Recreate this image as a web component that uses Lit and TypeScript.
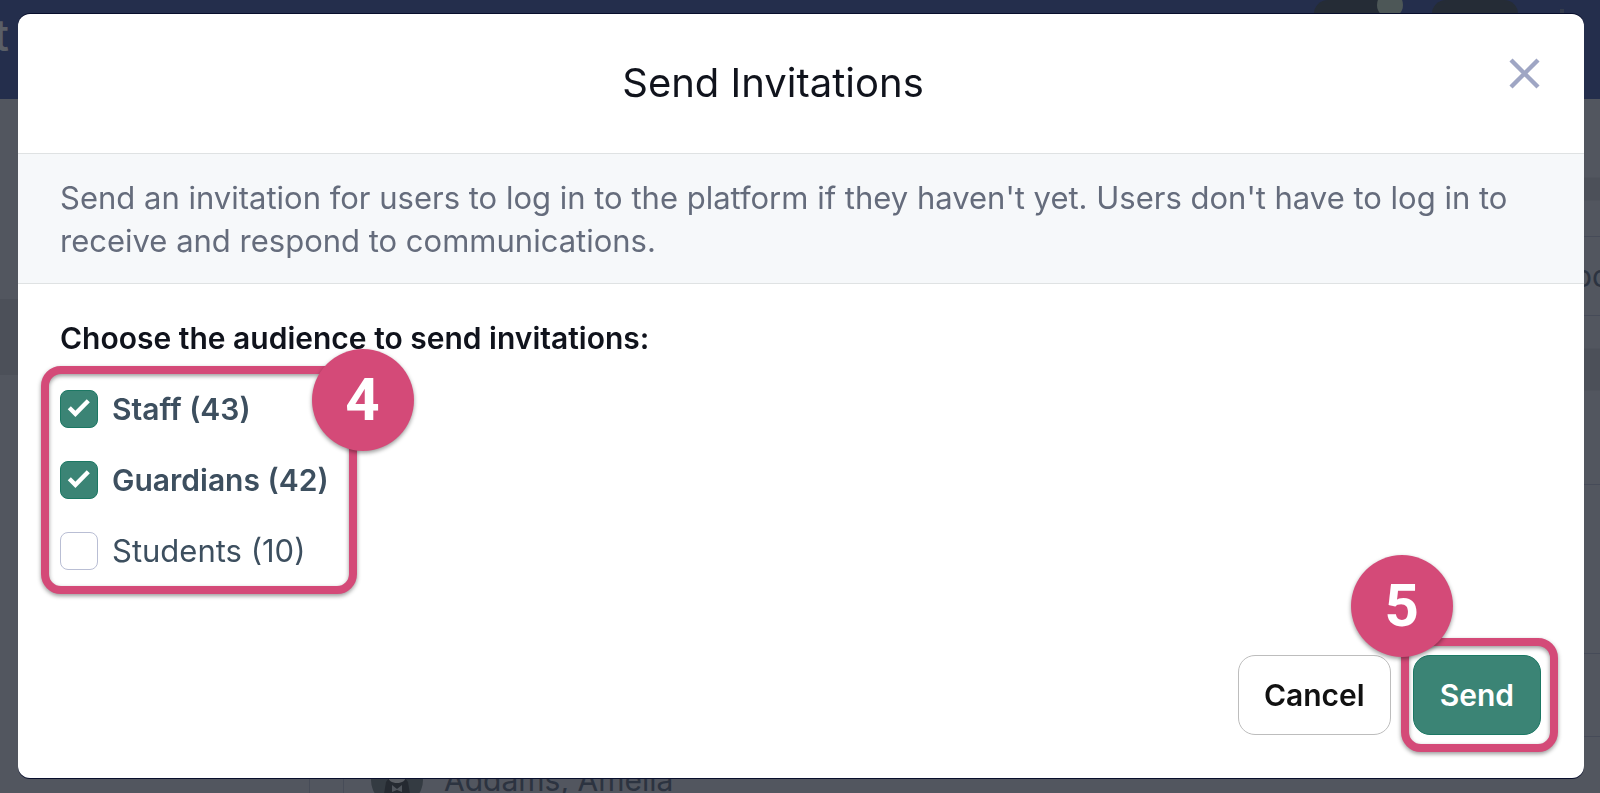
import { LitElement, html, css } from "lit";
import { customElement, state } from "lit/decorators.js";

interface Audience {
  id: string;
  name: string;
  count: number;
  checked: boolean;
}

/** Dimmed directory page that sits behind the dialog. */
@customElement("directory-page")
export class DirectoryPage extends LitElement {
  static styles = css`
    :host {
      display: flex;
      flex-direction: column;
      height: 100%;
      background: #52565f;
      color: #2c3340;
      font-family: Inter, "Liberation Sans", sans-serif;
    }
    .topbar {
      display: flex;
      justify-content: space-between;
      flex: none;
      height: 99px;
      background: #242e4c;
    }
    .brand {
      display: flex;
      justify-content: flex-end;
      width: 9px;
      overflow: hidden;
      font-size: 44px;
      font-weight: 500;
      line-height: 70px;
      color: #5a5e66;
    }
    .tools {
      display: flex;
      gap: 32px;
      padding-right: 36px;
    }
    .tool {
      position: relative;
      width: 86px;
      height: 30px;
      border-radius: 14px;
      background: #252c36;
    }
    .dot {
      position: absolute;
      right: -3px;
      top: -8px;
      width: 26px;
      height: 26px;
      border-radius: 50%;
      background: #4d5757;
    }
    .mark {
      width: 4px;
      height: 4px;
      margin: 9px 0 0 10px;
      background: #343c4c;
    }
    .content {
      display: grid;
      grid-template-columns: 309px 35px 1fr 26px;
      flex: 1;
      min-height: 0;
    }
    .side {
      padding-top: 200px;
    }
    .active {
      height: 76px;
      background: #4c5059;
    }
    .gutter {
      border: solid #474c58;
      border-width: 0 1px;
    }
    .list {
      display: flex;
      flex-direction: column;
      justify-content: flex-end;
      overflow: hidden;
    }
    .person {
      display: flex;
      align-items: center;
      gap: 21px;
      height: 52px;
      margin-bottom: -13px;
      padding-left: 27px;
      font-size: 30px;
    }
    .avatar {
      flex: none;
      width: 52px;
      height: 52px;
    }
    .edge {
      display: flex;
      flex-direction: column;
      overflow: hidden;
      font-size: 30px;
    }
    .cell {
      box-sizing: border-box;
      flex: none;
      height: 169px;
      border-bottom: 1px solid #464b58;
    }
    .cell.first {
      height: 138px;
      background: linear-gradient(#52565f 78px, #4c5059 79px, #4c5059 101px, #52565f 102px);
    }
    .cell.label {
      height: 79px;
      line-height: 78px;
    }
    .cell.tinted {
      background: linear-gradient(#52565f 32px, #4c5059 33px, #4c5059 74px, #52565f 75px);
    }
    .cell.last {
      height: 83px;
    }
  `;

  render() {
    return html`
      <header class="topbar">
        <span class="brand">t</span>
        <div class="tools">
          <span class="tool"><span class="dot"></span></span>
          <span class="tool"></span>
          <span class="mark"></span>
        </div>
      </header>
      <div class="content">
        <div class="side"><div class="active"></div></div>
        <div class="gutter"></div>
        <div class="list">
          <div class="person">
            <svg class="avatar" viewBox="0 0 52 52" aria-hidden="true">
              <circle cx="26" cy="26" r="26" fill="#343b42" />
              <path d="M15 28L18 24h16l3 4 4 24H11z" fill="#252a31" />
              <path d="M16 20h20c-1 7-5 9-10 9s-9-2-10-9z" fill="#5b5f65" />
              <path d="M21 31l5 4 5-4v7l-5-2-5 2zM22 41h8v3h-8z" fill="#50555c" />
            </svg>
            <span>Addams, Amelia</span>
          </div>
        </div>
        <div class="edge">
          <div class="cell first"></div>
          <div class="cell label">oc</div>
          <div class="cell tinted"></div>
          <div class="cell"></div>
          <div class="cell last"></div>
        </div>
      </div>
    `;
  }
}

@customElement("app-root")
export class AppRoot extends LitElement {
  static styles = css`
    :host {
      --pink: #d44a78;
      --green: #3b8475;
      --line: #dfe2e3;
      display: block;
      font-family: Inter, "Liberation Sans", sans-serif;
      font-size: 30px;
      line-height: 44px;
    }
    * {
      box-sizing: border-box;
    }
    .behind {
      position: fixed;
      inset: 0;
    }
    .overlay {
      position: relative;
      display: flex;
      min-height: 100vh;
      padding: 14px 16px 15px 18px;
    }
    .dialog {
      display: flex;
      flex-direction: column;
      flex: 1;
      border-radius: 12px;
      background: #fff;
      box-shadow: 0 -1px 0 #080e2c, 0 1px 0 #080e2c;
    }
    .head {
      display: flex;
      align-items: flex-start;
      gap: 20px;
      padding: 41px 42px 42px;
      border-bottom: 1px solid var(--line);
    }
    .title {
      flex: 1;
      margin: 0;
      font-size: 40px;
      line-height: 56px;
      font-weight: 400;
      text-align: center;
      color: #10131c;
    }
    .close {
      display: flex;
      justify-content: center;
      width: 36px;
      padding: 0;
      border: 0;
      background: none;
      cursor: pointer;
    }
    .close svg {
      flex: none;
      width: 36px;
      height: 36px;
    }
    .note {
      margin: 0;
      padding: 22px 42px 21px;
      border-bottom: 1px solid var(--line);
      background: #f6f8fa;
      color: #656c7c;
      font-size: 31px;
      line-height: 43px;
    }
    .body {
      flex: 1;
      padding: 32px 42px;
    }
    .choices {
      min-width: 0;
      margin: 0;
      padding: 0;
      border: 0;
    }
    .legend {
      padding: 0;
      font-weight: 600;
      color: #10131c;
    }
    .options {
      position: relative;
      display: flex;
      flex-direction: column;
      gap: 33px;
      width: fit-content;
      margin-top: 30px;
    }
    .option {
      display: flex;
      align-items: center;
      gap: 14px;
      height: 38px;
      color: #3d4f5f;
      font-size: 31px;
      cursor: pointer;
    }
    .option.checked {
      font-size: 30px;
      font-weight: 600;
    }
    .tick {
      position: relative;
      display: grid;
      place-items: center;
      width: 38px;
      height: 38px;
    }
    .tick > * {
      grid-area: 1 / 1;
    }
    .tick input {
      appearance: none;
      width: 38px;
      height: 38px;
      margin: 0;
      border: 1px solid #b9bed4;
      border-radius: 8px;
      background: #fff;
    }
    .tick input:checked {
      border-color: #1c7864;
      background: var(--green);
    }
    .tick svg {
      width: 24px;
      height: 20px;
      z-index: 1;
      pointer-events: none;
    }
    .actions {
      display: flex;
      justify-content: flex-end;
      gap: 22px;
      padding: 0 43px 43px;
    }
    .button {
      height: 80px;
      padding: 0 25px;
      border: 1px solid #bdbdbd;
      border-radius: 17px;
      background: #fff;
      color: #111;
      font: inherit;
      font-weight: 600;
      cursor: pointer;
    }
    .button.primary {
      padding: 0 26px;
      border-color: #1c7864;
      background: var(--green);
      color: #fff;
    }
    .target {
      position: relative;
      display: flex;
    }
    /* Tutorial callouts drawn over the dialog. */
    .frame {
      position: absolute;
      border: 8px solid var(--pink);
      border-radius: 20px;
      filter: drop-shadow(0 2px 2px rgb(0 0 0 / 40%));
      pointer-events: none;
    }
    .frame.wide {
      inset: -24px -28px -24px -19px;
    }
    .frame.tight {
      inset: -17px -17px -17px -12px;
    }
    .badge {
      position: absolute;
      display: grid;
      place-items: center;
      width: 102px;
      height: 102px;
      border-radius: 50%;
      background: var(--pink);
      box-shadow: 0 2px 4px rgb(0 0 0 / 40%);
      color: #fff;
      font: 700 60px/60px Roboto, "Liberation Sans", sans-serif;
      pointer-events: none;
    }
    .badge.four {
      top: -41px;
      right: -85px;
    }
    .badge.five {
      top: -100px;
      left: -62px;
    }
  `;

  @state() private audiences: Audience[] = [
    { id: "staff", name: "Staff", count: 43, checked: true },
    { id: "guardians", name: "Guardians", count: 42, checked: true },
    { id: "students", name: "Students", count: 10, checked: false },
  ];

  private toggle(id: string) {
    this.audiences = this.audiences.map((a) =>
      a.id === id ? { ...a, checked: !a.checked } : a
    );
  }

  private renderOption(a: Audience) {
    return html`
      <label class="option ${a.checked ? "checked" : ""}" for=${a.id}>
        <span class="tick">
          <input
            type="checkbox"
            id=${a.id}
            .checked=${a.checked}
            @change=${() => this.toggle(a.id)}
          />
          ${a.checked
            ? html`<svg viewBox="0 0 24 20" fill="none" aria-hidden="true">
                <path d="M2.3 8.8 L8.4 14.8 L21.3 1.8" stroke="#fff" stroke-width="4.4" />
              </svg>`
            : ""}
        </span>
        <span>${a.name} (${a.count})</span>
      </label>
    `;
  }

  render() {
    return html`
      <directory-page class="behind" aria-hidden="true"></directory-page>
      <div class="overlay">
        <section class="dialog" role="dialog" aria-modal="true" aria-labelledby="title">
          <header class="head">
            <h1 class="title" id="title">Send Invitations</h1>
            <button class="close" type="button" aria-label="Close">
              <svg viewBox="0 0 36 36" fill="none" stroke="#9fa6c4" stroke-width="4.4">
                <path d="M5 5 L32 32 M32 5 L5 32" />
              </svg>
            </button>
          </header>
          <p class="note">
            Send an invitation for users to log in to the platform if they haven't yet. Users
            don't have to log in to receive and respond to communications.
          </p>
          <div class="body">
            <fieldset class="choices">
              <legend class="legend">Choose the audience to send invitations:</legend>
              <div class="options">
                ${this.audiences.map((a) => this.renderOption(a))}
                <span class="frame wide"></span>
                <span class="badge four">4</span>
              </div>
            </fieldset>
          </div>
          <footer class="actions">
            <button class="button" type="button">Cancel</button>
            <div class="target">
              <button class="button primary" type="button">Send</button>
              <span class="frame tight"></span>
              <span class="badge five">5</span>
            </div>
          </footer>
        </section>
      </div>
    `;
  }
}
